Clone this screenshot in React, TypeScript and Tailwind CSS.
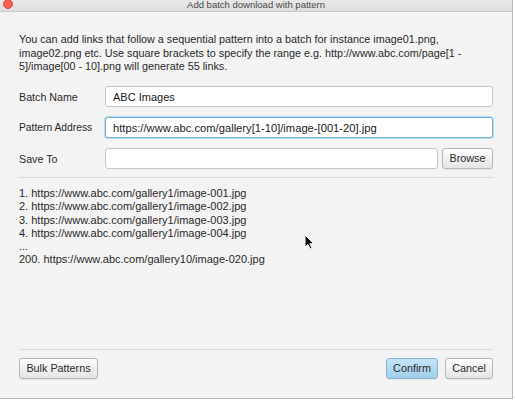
import { useState } from 'react'

const previewLinks = [
  '1. https://www.abc.com/gallery1/image-001.jpg',
  '2. https://www.abc.com/gallery1/image-002.jpg',
  '3. https://www.abc.com/gallery1/image-003.jpg',
  '4. https://www.abc.com/gallery1/image-004.jpg',
  '...',
  '200. https://www.abc.com/gallery10/image-020.jpg',
]

function Button({ label, primary = false, className = '' }: { label: string; primary?: boolean; className?: string }) {
  return (
    <button
      className={
        'h-[21px] rounded-[3px] border text-[10.8px] leading-none text-[#2b2b2b] ' +
        (primary
          ? 'border-[#86b6d6] bg-gradient-to-b from-[#c3e4f7] to-[#a2cfea] '
          : 'border-[#b6b6b6] bg-gradient-to-b from-[#fdfdfd] to-[#e5e5e5] ') +
        'shadow-[0_1px_0_rgba(0,0,0,0.06)] ' +
        className
      }
    >
      {label}
    </button>
  )
}

export default function App() {
  const [batchName, setBatchName] = useState('ABC Images')
  const [pattern, setPattern] = useState('https://www.abc.com/gallery[1-10]/image-[001-20].jpg')
  const [saveTo, setSaveTo] = useState('')

  return (
    <div className="w-[515px] h-[400px] bg-white font-['Liberation_Sans',Arial,sans-serif]">
      <div className="relative flex flex-col w-[513px] h-[399px] bg-[#f3f3f3] border-r border-b border-[#b9b9b9]">
        {/* Title bar */}
        <div className="relative flex items-center justify-center h-[12px] bg-gradient-to-b from-[#e8e8e8] to-[#dedede] border-b border-[#c8c8c8]">
          <span className="absolute left-[3px] top-[-1px] w-[10px] h-[10px] rounded-full bg-[#fc5f57] border border-[#e0463f]"></span>
          <span className="text-[9.5px] leading-none text-[#4a4a4a] mt-[-1px]">Add batch download with pattern</span>
        </div>

        <div className="flex-1 flex flex-col px-[19px] pt-[21px] pb-[19px] text-[#2a2a2a]">
          {/* Description */}
          <div className="text-[10.8px] leading-[13.7px] whitespace-nowrap">
            <div>You can add links that follow a sequential pattern into a batch for instance image01.png,</div>
            <div>image02.png etc. Use square brackets to specify the range e.g. http://www.abc.com/page[1 -</div>
            <div>5]/image[00 - 10].png will generate 55 links.</div>
          </div>

          {/* Form */}
          <div className="mt-[12px] flex flex-col gap-[10px]">
            <div className="flex items-center">
              <label className="w-[86px] text-[10.7px]">Batch Name</label>
              <input
                value={batchName}
                onChange={(e) => setBatchName(e.target.value)}
                className="flex-1 h-[21px] px-[7px] bg-white border border-[#c6c6c6] rounded-[3px] text-[11px] text-[#222] outline-none"
              />
            </div>
            <div className="flex items-center">
              <label className="w-[86px] text-[10.3px]">Pattern Address</label>
              <input
                value={pattern}
                onChange={(e) => setPattern(e.target.value)}
                className="flex-1 h-[21px] px-[7px] bg-white border border-[#6fb1de] rounded-[3px] shadow-[0_0_0_1px_#b9dcf2] text-[11.2px] text-[#222] outline-none"
              />
            </div>
            <div className="flex items-center">
              <label className="w-[86px] text-[10.7px]">Save To</label>
              <input
                value={saveTo}
                onChange={(e) => setSaveTo(e.target.value)}
                className="flex-1 h-[21px] px-[7px] bg-white border border-[#c6c6c6] rounded-[3px] text-[11px] text-[#222] outline-none"
              />
              <Button label="Browse" className="ml-[4px] w-[51px]" />
            </div>
          </div>

          <div className="mt-[8px] h-px bg-[#d8d8d8]"></div>

          {/* Preview of generated links */}
          <div className="mt-[9px] text-[11px] leading-[13.2px] whitespace-nowrap">
            {previewLinks.map((link) => (
              <div key={link}>{link}</div>
            ))}
          </div>

          <div className="flex-1"></div>

          <div className="h-px bg-[#d8d8d8]"></div>

          {/* Footer buttons */}
          <div className="mt-[8px] flex items-center">
            <Button label="Bulk Patterns" className="w-[79px]" />
            <div className="flex-1"></div>
            <Button label="Confirm" primary className="w-[52px]" />
            <Button label="Cancel" className="ml-[7px] w-[48px]" />
          </div>
        </div>

        {/* Mouse pointer */}
        <svg className="absolute left-[304px] top-[234px]" width="11" height="16" viewBox="0 0 11 16">
          <path d="M1 1 L1 13 L4 10.5 L6.2 15 L8 14.2 L5.9 9.8 L9.6 9.6 Z" fill="#000" stroke="#fff" strokeWidth="1" strokeLinejoin="round" />
        </svg>
      </div>
    </div>
  )
}
